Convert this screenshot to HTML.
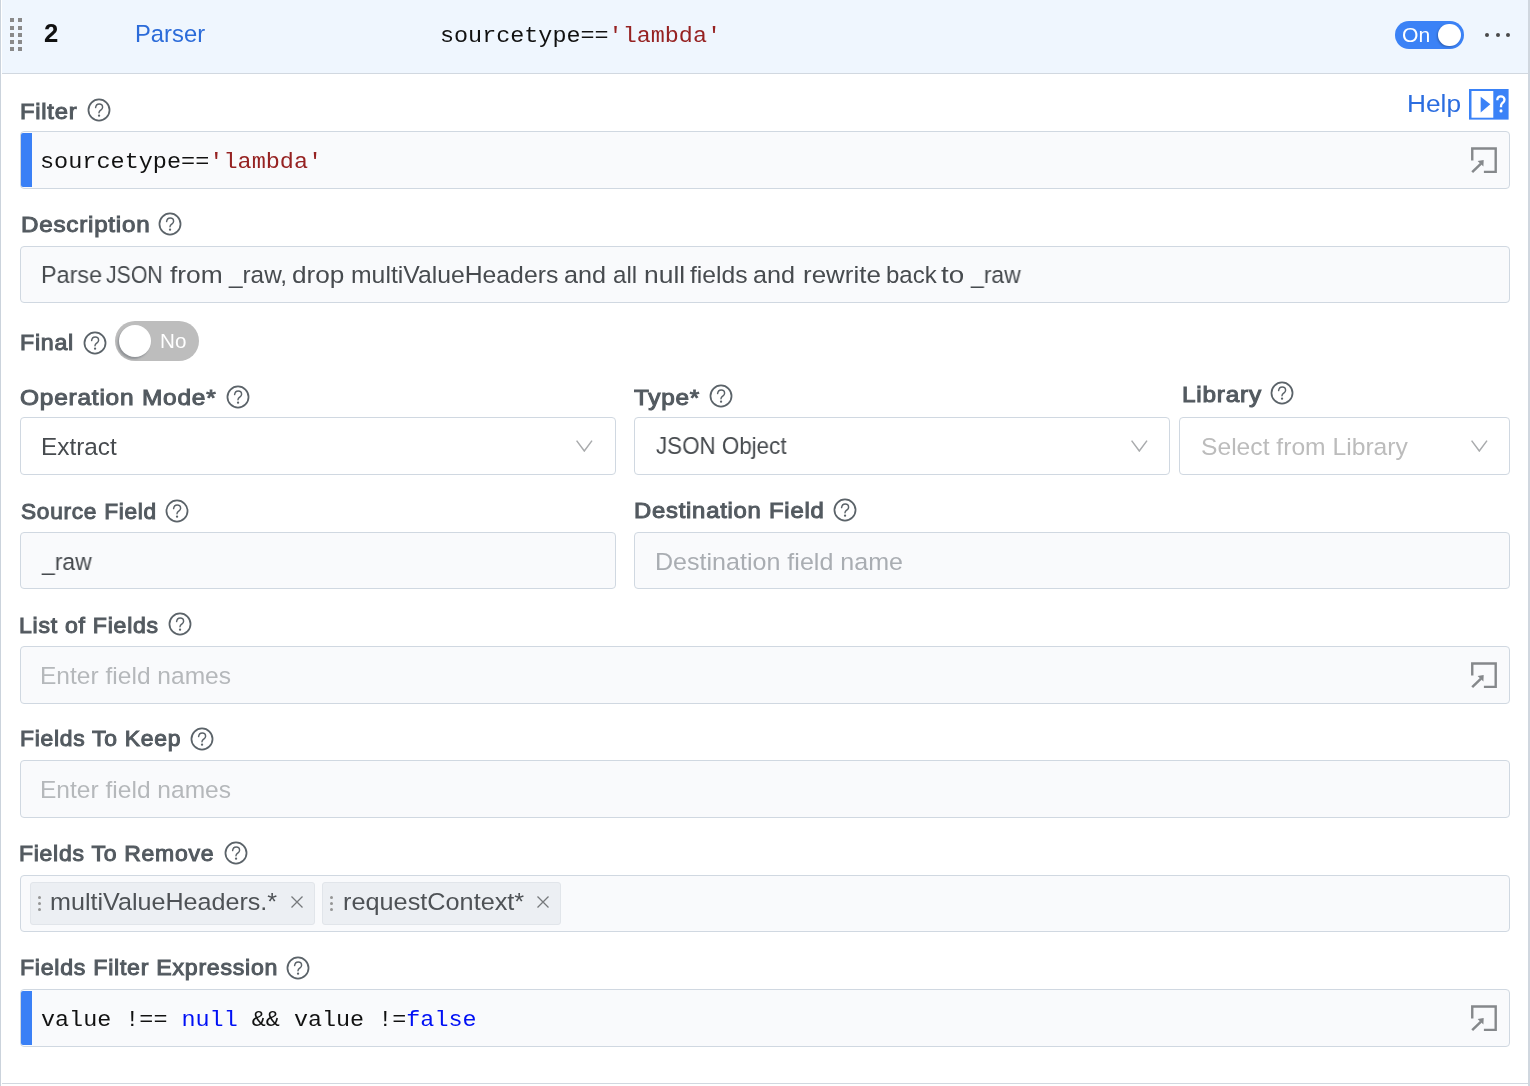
<!DOCTYPE html>
<html><head><meta charset="utf-8">
<style>
*{box-sizing:border-box;margin:0;padding:0}
html,body{width:1530px;height:1086px;overflow:hidden;background:#fff}
body{position:relative}
.r{position:absolute}
.t{position:absolute;white-space:pre;transform-origin:0 0;will-change:transform}
</style></head><body>
<div class="r" style="left:2px;top:0px;width:1526.00px;height:73.00px;background:#eff6fe"></div>
<div class="r" style="left:2px;top:73px;width:1526.00px;height:1.00px;background:#d1d8e0"></div>
<div class="r" style="left:10.25px;top:18.2px;width:4.00px;height:4.00px;background:#8a8a8a"></div>
<div class="r" style="left:10.25px;top:25.5px;width:4.00px;height:4.00px;background:#8a8a8a"></div>
<div class="r" style="left:10.25px;top:32.8px;width:4.00px;height:4.00px;background:#8a8a8a"></div>
<div class="r" style="left:10.25px;top:40.099999999999994px;width:4.00px;height:4.00px;background:#8a8a8a"></div>
<div class="r" style="left:10.25px;top:47.4px;width:4.00px;height:4.00px;background:#8a8a8a"></div>
<div class="r" style="left:17.6px;top:18.2px;width:4.00px;height:4.00px;background:#8a8a8a"></div>
<div class="r" style="left:17.6px;top:25.5px;width:4.00px;height:4.00px;background:#8a8a8a"></div>
<div class="r" style="left:17.6px;top:32.8px;width:4.00px;height:4.00px;background:#8a8a8a"></div>
<div class="r" style="left:17.6px;top:40.099999999999994px;width:4.00px;height:4.00px;background:#8a8a8a"></div>
<div class="r" style="left:17.6px;top:47.4px;width:4.00px;height:4.00px;background:#8a8a8a"></div>
<div class="t" style="left:44.30px;top:20.83px;font-family:'Liberation Sans',sans-serif;font-weight:bold;font-size:25px;line-height:25px;color:#111;transform:scaleX(1.0292)">2</div>
<div class="t" style="left:134.86px;top:22.73px;font-family:'Liberation Sans',sans-serif;font-weight:normal;font-size:23.7px;line-height:23.7px;color:#2b6bd9;transform:scaleX(1.0042)">Parser</div>
<div class="t" style="left:440.34px;top:25.49px;font-family:'Liberation Mono',monospace;font-weight:normal;font-size:22.6px;line-height:22.6px;color:#111;transform:scaleX(1.0362)">sourcetype==<span style='color:#962222'>'lambda'</span></div>
<div class="r" style="left:1394.8px;top:20.8px;width:69.10px;height:28.00px;background:#3b82f6;border-radius:14px"></div>
<div class="r" style="left:1438.3px;top:23.8px;width:22.4px;height:22.4px;border-radius:50%;background:#fff;box-shadow:-1px 1px 2px rgba(0,0,0,0.25)"></div>
<div class="t" style="left:1401.66px;top:25.07px;font-family:'Liberation Sans',sans-serif;font-weight:normal;font-size:20px;line-height:20px;color:#fff;transform:scaleX(1.0569)">On</div>
<div class="r" style="left:1485.2px;top:32.6px;width:4.20px;height:4.20px;background:#4a4a4a;border-radius:50%"></div>
<div class="r" style="left:1495.6000000000001px;top:32.6px;width:4.20px;height:4.20px;background:#4a4a4a;border-radius:50%"></div>
<div class="r" style="left:1506.0px;top:32.6px;width:4.20px;height:4.20px;background:#4a4a4a;border-radius:50%"></div>
<div class="r" style="left:0px;top:0px;width:1.00px;height:1086.00px;background:#cbd3dc"></div>
<div class="r" style="left:1528px;top:0px;width:2.00px;height:1086.00px;background:#d0d7df"></div>
<div class="r" style="left:2px;top:1083px;width:1526.00px;height:1.00px;background:#d1d8e0"></div>
<div class="t" style="left:20.12px;top:100.69px;font-family:'Liberation Sans',sans-serif;font-weight:normal;font-size:22px;line-height:22px;color:#535a60;-webkit-text-stroke:1.0px #535a60;letter-spacing:0.7px;transform:scaleX(1.0802)">Filter</div>
<svg class="r" style="left:86.5px;top:98px" width="24" height="24" viewBox="0 0 24 24"><circle cx="12" cy="12" r="10.55" fill="none" stroke="#5b6369" stroke-width="1.75"/><path d="M8.6 9.6C8.9 7.2 10.4 6 12.2 6C14.2 6 15.6 7.4 15.6 9.2C15.6 10.9 14.4 11.6 13.4 12.4C12.5 13.1 12.1 13.7 12 14.7" fill="none" stroke="#5b6369" stroke-width="1.45" stroke-linecap="round"/><circle cx="12.05" cy="17.7" r="1.15" fill="#5b6369"/></svg>
<div class="t" style="left:1407.40px;top:91.53px;font-family:'Liberation Sans',sans-serif;font-weight:normal;font-size:24.7px;line-height:24.7px;color:#2b6de0;transform:scaleX(1.0633)">Help</div>
<svg class="r" style="left:1469.3px;top:89.1px" width="40" height="31" viewBox="0 0 40 31"><rect x="0" y="0" width="39.6" height="30.6" fill="#3a82f7"/><rect x="2.5" y="2" width="21.8" height="26.7" fill="#fff"/><path d="M11.7 7.8 L21.3 15.2 L11.7 23.5Z" fill="#3a82f7"/><path d="M28.3 11.2C28.3 8.6 30 7.3 31.9 7.3C33.9 7.3 35.5 8.7 35.5 10.7C35.5 12.6 34.3 13.4 33.3 14.2C32.4 14.9 32 15.6 32 17.3V18.2" fill="none" stroke="#fff" stroke-width="2.3"/><circle cx="32" cy="21.9" r="1.55" fill="#fff"/></svg>
<div class="r" style="left:20px;top:131px;width:1490.00px;height:58.00px;border:1px solid #d0d8e1;border-radius:4px;background:#f9fafc"></div>
<div class="r" style="left:21px;top:133px;width:11.00px;height:54.00px;background:#3a80f6;border-top-left-radius:2px;border-bottom-left-radius:2px"></div>
<div class="t" style="left:40.48px;top:150.57px;font-family:'Liberation Mono',monospace;font-weight:normal;font-size:22.6px;line-height:22.6px;color:#111;transform:scaleX(1.0406)">sourcetype==<span style='color:#962222'>'lambda'</span></div>
<svg class="r" style="left:1471px;top:147px" width="27" height="27" viewBox="0 0 27 27"><path d="M1.25 13.4V1.45H24.7V24.85H12.9" fill="none" stroke="#85888b" stroke-width="2.4"/><path d="M1.2 25.1 L10 16.6" stroke="#85888b" stroke-width="2.5"/><path d="M6.6 14.1 L12.7 12.9 L12.4 19.5Z" fill="#85888b"/></svg>
<div class="t" style="left:20.56px;top:214.07px;font-family:'Liberation Sans',sans-serif;font-weight:normal;font-size:22px;line-height:22px;color:#535a60;-webkit-text-stroke:1.0px #535a60;letter-spacing:0.7px;transform:scaleX(1.0991)">Description</div>
<svg class="r" style="left:158px;top:211.9px" width="24" height="24" viewBox="0 0 24 24"><circle cx="12" cy="12" r="10.55" fill="none" stroke="#5b6369" stroke-width="1.75"/><path d="M8.6 9.6C8.9 7.2 10.4 6 12.2 6C14.2 6 15.6 7.4 15.6 9.2C15.6 10.9 14.4 11.6 13.4 12.4C12.5 13.1 12.1 13.7 12 14.7" fill="none" stroke="#5b6369" stroke-width="1.45" stroke-linecap="round"/><circle cx="12.05" cy="17.7" r="1.15" fill="#5b6369"/></svg>
<div class="r" style="left:20px;top:246px;width:1490.00px;height:57.00px;border:1px solid #d0d8e1;border-radius:4px;background:#f9fafc"></div>
<div class="t" style="left:41.06px;top:264.19px;font-family:'Liberation Sans',sans-serif;font-weight:normal;font-size:23.7px;line-height:23.7px;color:#474b4f;transform:scaleX(0.9870)">Parse</div>
<div class="t" style="left:105.88px;top:264.19px;font-family:'Liberation Sans',sans-serif;font-weight:normal;font-size:23.7px;line-height:23.7px;color:#474b4f;transform:scaleX(0.8970)">JSON</div>
<div class="t" style="left:169.66px;top:264.19px;font-family:'Liberation Sans',sans-serif;font-weight:normal;font-size:23.7px;line-height:23.7px;color:#474b4f;transform:scaleX(1.1133)">from</div>
<div class="t" style="left:228.84px;top:264.19px;font-family:'Liberation Sans',sans-serif;font-weight:normal;font-size:23.7px;line-height:23.7px;color:#474b4f;transform:scaleX(1.0265)">_raw,</div>
<div class="t" style="left:291.98px;top:264.19px;font-family:'Liberation Sans',sans-serif;font-weight:normal;font-size:23.7px;line-height:23.7px;color:#474b4f;transform:scaleX(1.1055)">drop</div>
<div class="t" style="left:350.86px;top:264.19px;font-family:'Liberation Sans',sans-serif;font-weight:normal;font-size:23.7px;line-height:23.7px;color:#474b4f;transform:scaleX(1.0448)">multiValueHeaders</div>
<div class="t" style="left:563.86px;top:264.19px;font-family:'Liberation Sans',sans-serif;font-weight:normal;font-size:23.7px;line-height:23.7px;color:#474b4f;transform:scaleX(1.0643)">and</div>
<div class="t" style="left:612.54px;top:264.19px;font-family:'Liberation Sans',sans-serif;font-weight:normal;font-size:23.7px;line-height:23.7px;color:#474b4f;transform:scaleX(1.0181)">all</div>
<div class="t" style="left:644.20px;top:264.19px;font-family:'Liberation Sans',sans-serif;font-weight:normal;font-size:23.7px;line-height:23.7px;color:#474b4f;transform:scaleX(1.1154)">null</div>
<div class="t" style="left:689.66px;top:264.19px;font-family:'Liberation Sans',sans-serif;font-weight:normal;font-size:23.7px;line-height:23.7px;color:#474b4f;transform:scaleX(1.0417)">fields</div>
<div class="t" style="left:753.30px;top:264.19px;font-family:'Liberation Sans',sans-serif;font-weight:normal;font-size:23.7px;line-height:23.7px;color:#474b4f;transform:scaleX(1.0643)">and</div>
<div class="t" style="left:802.54px;top:264.19px;font-family:'Liberation Sans',sans-serif;font-weight:normal;font-size:23.7px;line-height:23.7px;color:#474b4f;transform:scaleX(1.0952)">rewrite</div>
<div class="t" style="left:886.08px;top:264.19px;font-family:'Liberation Sans',sans-serif;font-weight:normal;font-size:23.7px;line-height:23.7px;color:#474b4f;transform:scaleX(1.0122)">back</div>
<div class="t" style="left:941.44px;top:264.19px;font-family:'Liberation Sans',sans-serif;font-weight:normal;font-size:23.7px;line-height:23.7px;color:#474b4f;transform:scaleX(1.1744)">to</div>
<div class="t" style="left:971.26px;top:264.19px;font-family:'Liberation Sans',sans-serif;font-weight:normal;font-size:23.7px;line-height:23.7px;color:#474b4f;transform:scaleX(0.9680)">_raw</div>
<div class="t" style="left:20.38px;top:332.33px;font-family:'Liberation Sans',sans-serif;font-weight:normal;font-size:22px;line-height:22px;color:#535a60;-webkit-text-stroke:1.0px #535a60;letter-spacing:0.7px;transform:scaleX(1.0539)">Final</div>
<svg class="r" style="left:82.5px;top:330.5px" width="24" height="24" viewBox="0 0 24 24"><circle cx="12" cy="12" r="10.55" fill="none" stroke="#5b6369" stroke-width="1.75"/><path d="M8.6 9.6C8.9 7.2 10.4 6 12.2 6C14.2 6 15.6 7.4 15.6 9.2C15.6 10.9 14.4 11.6 13.4 12.4C12.5 13.1 12.1 13.7 12 14.7" fill="none" stroke="#5b6369" stroke-width="1.45" stroke-linecap="round"/><circle cx="12.05" cy="17.7" r="1.15" fill="#5b6369"/></svg>
<div class="r" style="left:115.2px;top:320.9px;width:83.70px;height:39.90px;background:#bdbdbd;border-radius:20px"></div>
<div class="r" style="left:118.5px;top:324.6px;width:32.7px;height:32.7px;border-radius:50%;background:#fff;box-shadow:-1.5px 2px 2px rgba(60,70,80,0.35)"></div>
<div class="t" style="left:160.20px;top:330.53px;font-family:'Liberation Sans',sans-serif;font-weight:normal;font-size:20px;line-height:20px;color:#fff;transform:scaleX(1.0310)">No</div>
<div class="t" style="left:20.28px;top:386.61px;font-family:'Liberation Sans',sans-serif;font-weight:normal;font-size:22px;line-height:22px;color:#535a60;-webkit-text-stroke:1.0px #535a60;letter-spacing:0.7px;transform:scaleX(1.1112)">Operation Mode*</div>
<svg class="r" style="left:226px;top:384.5px" width="24" height="24" viewBox="0 0 24 24"><circle cx="12" cy="12" r="10.55" fill="none" stroke="#5b6369" stroke-width="1.75"/><path d="M8.6 9.6C8.9 7.2 10.4 6 12.2 6C14.2 6 15.6 7.4 15.6 9.2C15.6 10.9 14.4 11.6 13.4 12.4C12.5 13.1 12.1 13.7 12 14.7" fill="none" stroke="#5b6369" stroke-width="1.45" stroke-linecap="round"/><circle cx="12.05" cy="17.7" r="1.15" fill="#5b6369"/></svg>
<div class="r" style="left:20px;top:417px;width:596.00px;height:58.00px;border:1px solid #d0d8e1;border-radius:4px;background:#fff"></div>
<div class="t" style="left:40.78px;top:435.55px;font-family:'Liberation Sans',sans-serif;font-weight:normal;font-size:23.7px;line-height:23.7px;color:#474b4f;transform:scaleX(1.0273)">Extract</div>
<svg class="r" style="left:575.5px;top:440px" width="17" height="12" viewBox="0 0 17 12"><path d="M0.6 0.6 L8.3 11 L16 0.6" fill="none" stroke="#a9abad" stroke-width="1.5"/></svg>
<div class="t" style="left:634.00px;top:386.69px;font-family:'Liberation Sans',sans-serif;font-weight:normal;font-size:22px;line-height:22px;color:#535a60;-webkit-text-stroke:1.0px #535a60;letter-spacing:0.7px;transform:scaleX(1.1065)">Type*</div>
<svg class="r" style="left:708.9px;top:383.8px" width="24" height="24" viewBox="0 0 24 24"><circle cx="12" cy="12" r="10.55" fill="none" stroke="#5b6369" stroke-width="1.75"/><path d="M8.6 9.6C8.9 7.2 10.4 6 12.2 6C14.2 6 15.6 7.4 15.6 9.2C15.6 10.9 14.4 11.6 13.4 12.4C12.5 13.1 12.1 13.7 12 14.7" fill="none" stroke="#5b6369" stroke-width="1.45" stroke-linecap="round"/><circle cx="12.05" cy="17.7" r="1.15" fill="#5b6369"/></svg>
<div class="r" style="left:634px;top:417px;width:536.00px;height:58.00px;border:1px solid #d0d8e1;border-radius:4px;background:#fff"></div>
<div class="t" style="left:656.46px;top:435.37px;font-family:'Liberation Sans',sans-serif;font-weight:normal;font-size:23.7px;line-height:23.7px;color:#474b4f;transform:scaleX(0.9443)">JSON Object</div>
<svg class="r" style="left:1130.5px;top:440px" width="17" height="12" viewBox="0 0 17 12"><path d="M0.6 0.6 L8.3 11 L16 0.6" fill="none" stroke="#a9abad" stroke-width="1.5"/></svg>
<div class="t" style="left:1181.66px;top:383.69px;font-family:'Liberation Sans',sans-serif;font-weight:normal;font-size:22px;line-height:22px;color:#535a60;-webkit-text-stroke:1.0px #535a60;letter-spacing:0.7px;transform:scaleX(1.1077)">Library</div>
<svg class="r" style="left:1270px;top:381.4px" width="24" height="24" viewBox="0 0 24 24"><circle cx="12" cy="12" r="10.55" fill="none" stroke="#5b6369" stroke-width="1.75"/><path d="M8.6 9.6C8.9 7.2 10.4 6 12.2 6C14.2 6 15.6 7.4 15.6 9.2C15.6 10.9 14.4 11.6 13.4 12.4C12.5 13.1 12.1 13.7 12 14.7" fill="none" stroke="#5b6369" stroke-width="1.45" stroke-linecap="round"/><circle cx="12.05" cy="17.7" r="1.15" fill="#5b6369"/></svg>
<div class="r" style="left:1179px;top:417px;width:331.00px;height:58.00px;border:1px solid #d0d8e1;border-radius:4px;background:#fff"></div>
<div class="t" style="left:1200.66px;top:436.01px;font-family:'Liberation Sans',sans-serif;font-weight:normal;font-size:23.7px;line-height:23.7px;color:#bcbcbc;transform:scaleX(1.0405)">Select from Library</div>
<svg class="r" style="left:1470.5px;top:440px" width="17" height="12" viewBox="0 0 17 12"><path d="M0.6 0.6 L8.3 11 L16 0.6" fill="none" stroke="#a9abad" stroke-width="1.5"/></svg>
<div class="t" style="left:20.54px;top:500.69px;font-family:'Liberation Sans',sans-serif;font-weight:normal;font-size:22px;line-height:22px;color:#535a60;-webkit-text-stroke:1.0px #535a60;letter-spacing:0.7px;transform:scaleX(1.0299)">Source Field</div>
<svg class="r" style="left:165.1px;top:498.5px" width="24" height="24" viewBox="0 0 24 24"><circle cx="12" cy="12" r="10.55" fill="none" stroke="#5b6369" stroke-width="1.75"/><path d="M8.6 9.6C8.9 7.2 10.4 6 12.2 6C14.2 6 15.6 7.4 15.6 9.2C15.6 10.9 14.4 11.6 13.4 12.4C12.5 13.1 12.1 13.7 12 14.7" fill="none" stroke="#5b6369" stroke-width="1.45" stroke-linecap="round"/><circle cx="12.05" cy="17.7" r="1.15" fill="#5b6369"/></svg>
<div class="r" style="left:20px;top:532px;width:596.00px;height:57.00px;border:1px solid #d0d8e1;border-radius:4px;background:#f9fafc"></div>
<div class="t" style="left:42.16px;top:551.03px;font-family:'Liberation Sans',sans-serif;font-weight:normal;font-size:23.7px;line-height:23.7px;color:#474b4f;transform:scaleX(0.9680)">_raw</div>
<div class="t" style="left:633.94px;top:500.43px;font-family:'Liberation Sans',sans-serif;font-weight:normal;font-size:22px;line-height:22px;color:#535a60;-webkit-text-stroke:1.0px #535a60;letter-spacing:0.7px;transform:scaleX(1.0838)">Destination Field</div>
<svg class="r" style="left:833px;top:498.4px" width="24" height="24" viewBox="0 0 24 24"><circle cx="12" cy="12" r="10.55" fill="none" stroke="#5b6369" stroke-width="1.75"/><path d="M8.6 9.6C8.9 7.2 10.4 6 12.2 6C14.2 6 15.6 7.4 15.6 9.2C15.6 10.9 14.4 11.6 13.4 12.4C12.5 13.1 12.1 13.7 12 14.7" fill="none" stroke="#5b6369" stroke-width="1.45" stroke-linecap="round"/><circle cx="12.05" cy="17.7" r="1.15" fill="#5b6369"/></svg>
<div class="r" style="left:634px;top:532px;width:876.00px;height:57.00px;border:1px solid #d0d8e1;border-radius:4px;background:#f9fafc"></div>
<div class="t" style="left:654.86px;top:550.73px;font-family:'Liberation Sans',sans-serif;font-weight:normal;font-size:23.7px;line-height:23.7px;color:#a9adb2;transform:scaleX(1.0581)">Destination field name</div>
<div class="t" style="left:19.48px;top:614.51px;font-family:'Liberation Sans',sans-serif;font-weight:normal;font-size:22px;line-height:22px;color:#535a60;-webkit-text-stroke:1.0px #535a60;letter-spacing:0.7px;transform:scaleX(1.0492)">List of Fields</div>
<svg class="r" style="left:168.1px;top:612.4px" width="24" height="24" viewBox="0 0 24 24"><circle cx="12" cy="12" r="10.55" fill="none" stroke="#5b6369" stroke-width="1.75"/><path d="M8.6 9.6C8.9 7.2 10.4 6 12.2 6C14.2 6 15.6 7.4 15.6 9.2C15.6 10.9 14.4 11.6 13.4 12.4C12.5 13.1 12.1 13.7 12 14.7" fill="none" stroke="#5b6369" stroke-width="1.45" stroke-linecap="round"/><circle cx="12.05" cy="17.7" r="1.15" fill="#5b6369"/></svg>
<div class="r" style="left:20px;top:646px;width:1490.00px;height:58.00px;border:1px solid #d0d8e1;border-radius:4px;background:#f9fafc"></div>
<div class="t" style="left:40.42px;top:665.09px;font-family:'Liberation Sans',sans-serif;font-weight:normal;font-size:23.7px;line-height:23.7px;color:#b5b8bb;transform:scaleX(1.0364)">Enter field names</div>
<svg class="r" style="left:1471px;top:662px" width="27" height="27" viewBox="0 0 27 27"><path d="M1.25 13.4V1.45H24.7V24.85H12.9" fill="none" stroke="#85888b" stroke-width="2.4"/><path d="M1.2 25.1 L10 16.6" stroke="#85888b" stroke-width="2.5"/><path d="M6.6 14.1 L12.7 12.9 L12.4 19.5Z" fill="#85888b"/></svg>
<div class="t" style="left:20.20px;top:728.43px;font-family:'Liberation Sans',sans-serif;font-weight:normal;font-size:22px;line-height:22px;color:#535a60;-webkit-text-stroke:1.0px #535a60;letter-spacing:0.7px;transform:scaleX(1.0398)">Fields To Keep</div>
<svg class="r" style="left:189.7px;top:726.8px" width="24" height="24" viewBox="0 0 24 24"><circle cx="12" cy="12" r="10.55" fill="none" stroke="#5b6369" stroke-width="1.75"/><path d="M8.6 9.6C8.9 7.2 10.4 6 12.2 6C14.2 6 15.6 7.4 15.6 9.2C15.6 10.9 14.4 11.6 13.4 12.4C12.5 13.1 12.1 13.7 12 14.7" fill="none" stroke="#5b6369" stroke-width="1.45" stroke-linecap="round"/><circle cx="12.05" cy="17.7" r="1.15" fill="#5b6369"/></svg>
<div class="r" style="left:20px;top:760px;width:1490.00px;height:58.00px;border:1px solid #d0d8e1;border-radius:4px;background:#f9fafc"></div>
<div class="t" style="left:40.42px;top:779.45px;font-family:'Liberation Sans',sans-serif;font-weight:normal;font-size:23.7px;line-height:23.7px;color:#b5b8bb;transform:scaleX(1.0364)">Enter field names</div>
<div class="t" style="left:19.48px;top:843.15px;font-family:'Liberation Sans',sans-serif;font-weight:normal;font-size:22px;line-height:22px;color:#535a60;-webkit-text-stroke:1.0px #535a60;letter-spacing:0.7px;transform:scaleX(1.0448)">Fields To Remove</div>
<svg class="r" style="left:223.9px;top:841.4px" width="24" height="24" viewBox="0 0 24 24"><circle cx="12" cy="12" r="10.55" fill="none" stroke="#5b6369" stroke-width="1.75"/><path d="M8.6 9.6C8.9 7.2 10.4 6 12.2 6C14.2 6 15.6 7.4 15.6 9.2C15.6 10.9 14.4 11.6 13.4 12.4C12.5 13.1 12.1 13.7 12 14.7" fill="none" stroke="#5b6369" stroke-width="1.45" stroke-linecap="round"/><circle cx="12.05" cy="17.7" r="1.15" fill="#5b6369"/></svg>
<div class="r" style="left:20px;top:875px;width:1490.00px;height:57.00px;border:1px solid #d0d8e1;border-radius:4px;background:#f9fafc"></div>
<div class="r" style="left:30.2px;top:882.2px;width:284.70px;height:42.50px;background:#eceff3;border:1px solid #e1e5ea;border-radius:3px"></div>
<div class="r" style="left:37.8px;top:896.1px;width:3.00px;height:3.00px;background:#959595;border-radius:50%"></div>
<div class="r" style="left:37.8px;top:901.9px;width:3.00px;height:3.00px;background:#959595;border-radius:50%"></div>
<div class="r" style="left:37.8px;top:907.7px;width:3.00px;height:3.00px;background:#959595;border-radius:50%"></div>
<div class="t" style="left:50.38px;top:891.21px;font-family:'Liberation Sans',sans-serif;font-weight:normal;font-size:23.7px;line-height:23.7px;color:#4e5256;transform:scaleX(1.0603)">multiValueHeaders.*</div>
<svg class="r" style="left:291px;top:896.3px" width="12" height="12" viewBox="0 0 12 12"><path d="M0.5 0.5L11.5 11.5M11.5 0.5L0.5 11.5" stroke="#76797c" stroke-width="1.3"/></svg>
<div class="r" style="left:322.4px;top:882.2px;width:239.10px;height:42.50px;background:#eceff3;border:1px solid #e1e5ea;border-radius:3px"></div>
<div class="r" style="left:329.7px;top:896.1px;width:3.00px;height:3.00px;background:#959595;border-radius:50%"></div>
<div class="r" style="left:329.7px;top:901.9px;width:3.00px;height:3.00px;background:#959595;border-radius:50%"></div>
<div class="r" style="left:329.7px;top:907.7px;width:3.00px;height:3.00px;background:#959595;border-radius:50%"></div>
<div class="t" style="left:342.56px;top:891.21px;font-family:'Liberation Sans',sans-serif;font-weight:normal;font-size:23.7px;line-height:23.7px;color:#4e5256;transform:scaleX(1.0668)">requestContext*</div>
<svg class="r" style="left:537.3px;top:896.3px" width="12" height="12" viewBox="0 0 12 12"><path d="M0.5 0.5L11.5 11.5M11.5 0.5L0.5 11.5" stroke="#76797c" stroke-width="1.3"/></svg>
<div class="t" style="left:20.20px;top:956.97px;font-family:'Liberation Sans',sans-serif;font-weight:normal;font-size:22px;line-height:22px;color:#535a60;-webkit-text-stroke:1.0px #535a60;letter-spacing:0.7px;transform:scaleX(1.0520)">Fields Filter Expression</div>
<svg class="r" style="left:286.4px;top:955.5px" width="24" height="24" viewBox="0 0 24 24"><circle cx="12" cy="12" r="10.55" fill="none" stroke="#5b6369" stroke-width="1.75"/><path d="M8.6 9.6C8.9 7.2 10.4 6 12.2 6C14.2 6 15.6 7.4 15.6 9.2C15.6 10.9 14.4 11.6 13.4 12.4C12.5 13.1 12.1 13.7 12 14.7" fill="none" stroke="#5b6369" stroke-width="1.45" stroke-linecap="round"/><circle cx="12.05" cy="17.7" r="1.15" fill="#5b6369"/></svg>
<div class="r" style="left:20px;top:989px;width:1490.00px;height:58.00px;border:1px solid #d0d8e1;border-radius:4px;background:#f9fafc"></div>
<div class="r" style="left:21px;top:991px;width:11.00px;height:54.00px;background:#3a80f6;border-top-left-radius:2px;border-bottom-left-radius:2px"></div>
<div class="t" style="left:41.40px;top:1009.17px;font-family:'Liberation Mono',monospace;font-weight:normal;font-size:22.6px;line-height:22.6px;color:#111;transform:scaleX(1.0362)">value !== <span style='color:#0010f5'>null</span> &amp;&amp; value !=<span style='color:#0010f5'>false</span></div>
<svg class="r" style="left:1471px;top:1004.5px" width="27" height="27" viewBox="0 0 27 27"><path d="M1.25 13.4V1.45H24.7V24.85H12.9" fill="none" stroke="#85888b" stroke-width="2.4"/><path d="M1.2 25.1 L10 16.6" stroke="#85888b" stroke-width="2.5"/><path d="M6.6 14.1 L12.7 12.9 L12.4 19.5Z" fill="#85888b"/></svg>
</body></html>
